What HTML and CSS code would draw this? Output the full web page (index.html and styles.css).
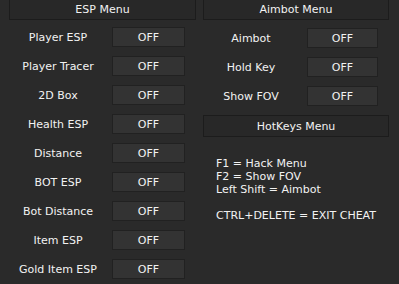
FILE: index.html
```html
<!DOCTYPE html>
<html lang="en">
<head>
    <meta charset="UTF-8">
    <meta name="viewport" content="width=device-width, initial-scale=1.0">
    <title>Cheat Menu</title>
    <link rel="stylesheet" href="styles.css">
</head>
<body>
    <div class="menu">
        <!-- ESP settings -->
        <div class="column col-esp">
            <div class="header">ESP Menu</div>
            <div class="rows">
                <div class="row"><span class="label">Player ESP</span><button class="toggle">OFF</button></div>
                <div class="row"><span class="label">Player Tracer</span><button class="toggle">OFF</button></div>
                <div class="row"><span class="label">2D Box</span><button class="toggle">OFF</button></div>
                <div class="row"><span class="label">Health ESP</span><button class="toggle">OFF</button></div>
                <div class="row"><span class="label">Distance</span><button class="toggle">OFF</button></div>
                <div class="row"><span class="label">BOT ESP</span><button class="toggle">OFF</button></div>
                <div class="row"><span class="label">Bot Distance</span><button class="toggle">OFF</button></div>
                <div class="row"><span class="label">Item ESP</span><button class="toggle">OFF</button></div>
                <div class="row"><span class="label">Gold Item ESP</span><button class="toggle">OFF</button></div>
            </div>
        </div>

        <!-- Aimbot settings and hotkeys -->
        <div class="column col-aim">
            <div class="header">Aimbot Menu</div>
            <div class="rows">
                <div class="row"><span class="label">Aimbot</span><button class="toggle">OFF</button></div>
                <div class="row"><span class="label">Hold Key</span><button class="toggle">OFF</button></div>
                <div class="row"><span class="label">Show FOV</span><button class="toggle">OFF</button></div>
            </div>
            <div class="header hotkeys-header">HotKeys Menu</div>
            <div class="hotkeys">
                <p>F1 = Hack Menu</p>
                <p>F2 = Show FOV</p>
                <p>Left Shift = Aimbot</p>
                <p class="spacer">CTRL+DELETE = EXIT CHEAT</p>
            </div>
        </div>
    </div>
</body>
</html>
```

FILE: styles.css
```css
* {
    box-sizing: border-box;
    margin: 0;
    padding: 0;
    font-family: 'DejaVu Sans', Verdana, sans-serif;
}

body {
    background-color: #2a2a2a;
    color: #f2f2f2;
    font-size: 11px;
}

.menu {
    display: flex;
    gap: 7px;
    padding-left: 9px;
    margin-top: -1px;
}

.col-esp {
    width: 187px;
}

.col-aim {
    width: 186px;
}

.header {
    height: 21px;
    border: 1px solid #1c1c1c;
    background-color: #282828;
    display: flex;
    align-items: center;
    justify-content: center;
}

.rows {
    display: flex;
    flex-direction: column;
    gap: 9px;
    padding-top: 7px;
}

.col-aim .rows {
    padding-top: 8px;
}

.row {
    display: grid;
    grid-template-columns: 98px 73px;
    column-gap: 5px;
    height: 20px;
    align-items: center;
}

.col-aim .row {
    grid-template-columns: 96px 71px;
    column-gap: 8px;
}

.label {
    text-align: center;
    white-space: nowrap;
}

.toggle {
    height: 20px;
    background-color: #333333;
    border: 1px solid #212121;
    color: #f2f2f2;
    font-size: 11px;
}

.hotkeys-header {
    height: 22px;
    margin-top: 9px;
}

.hotkeys {
    padding-left: 13px;
    margin-top: 20px;
    line-height: 13px;
}

.hotkeys .spacer {
    margin-top: 13px;
}
```
